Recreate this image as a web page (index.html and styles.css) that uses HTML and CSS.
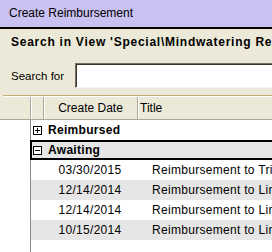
FILE: index.html
```html
<!DOCTYPE html>
<html>
<head>
<meta charset="utf-8">
<link rel="stylesheet" href="styles.css">
</head>
<body>
<div class="titlebar">Create Reimbursement</div>
<div class="panel">
  <div class="heading">Search in View 'Special\Mindwatering Reimbursements'</div>
  <div class="search">
    <span class="label">Search for</span>
    <div class="input"></div>
  </div>
  <div class="sep"></div>
</div>
<div class="view">
  <div class="hdr">
    <div class="hc hc0"></div>
    <div class="hc hc1"></div>
    <div class="hc hc2">Create Date</div>
    <div class="hc hc3">Title</div>
  </div>
  <div class="row">
    <div class="gut"></div>
    <div class="body cat">
      <svg class="twisty" width="9" height="9" viewBox="0 0 9 9"><rect x="0.5" y="0.5" width="8" height="8" fill="#fff" stroke="#000"/><path d="M2 4.5H7M4.5 2V7" stroke="#000"/></svg>
      <span>Reimbursed</span>
    </div>
  </div>
  <div class="row">
    <div class="gut"></div>
    <div class="body cat sel">
      <svg class="twisty" width="9" height="9" viewBox="0 0 9 9"><rect x="0.5" y="0.5" width="8" height="8" fill="#fff" stroke="#000"/><path d="M2 4.5H7" stroke="#000"/></svg>
      <span>Awaiting</span>
    </div>
  </div>
  <div class="row">
    <div class="gut"></div>
    <div class="body doc"><span class="c1"></span><span class="c2">03/30/2015</span><span class="c3">Reimbursement to Trina Smith</span></div>
  </div>
  <div class="row">
    <div class="gut"></div>
    <div class="body doc alt"><span class="c1"></span><span class="c2">12/14/2014</span><span class="c3">Reimbursement to Linda Brown</span></div>
  </div>
  <div class="row">
    <div class="gut"></div>
    <div class="body doc"><span class="c1"></span><span class="c2">12/14/2014</span><span class="c3">Reimbursement to Linda Brown</span></div>
  </div>
  <div class="row">
    <div class="gut"></div>
    <div class="body doc alt"><span class="c1"></span><span class="c2">10/15/2014</span><span class="c3">Reimbursement to Linda Brown</span></div>
  </div>
  <div class="row">
    <div class="gut"></div>
    <div class="body empty"></div>
  </div>
</div>
</body>
</html>
```

FILE: styles.css
```css
* { box-sizing: border-box; }
html, body { margin: 0; padding: 0; }
body {
  width: 272px;
  height: 252px;
  overflow: hidden;
  background: #fff;
  font-family: "Liberation Sans", Arial, sans-serif;
  font-size: 12px;
  color: #000;
}
.titlebar {
  height: 29px;
  background: #c9c1f1;
  border-bottom: 2px solid #000;
  padding-left: 9px;
  line-height: 27px;
  white-space: nowrap;
}
.panel {
  background: #ece9d8;
  padding-top: 5px;
}
.heading {
  font-weight: bold;
  font-size: 12px;
  letter-spacing: 0.75px;
  line-height: 16px;
  padding-left: 11px;
  white-space: nowrap;
  overflow: hidden;
}
.search {
  display: flex;
  align-items: center;
  margin-top: 13px;
  height: 25px;
}
.label {
  width: 75px;
  padding-left: 11px;
  font-size: 11.5px;
  white-space: nowrap;
}
.input {
  flex: 1;
  height: 25px;
  background: #fff;
  border-style: solid;
  border-width: 1px 0 1px 1px;
  border-color: #716f64 #fff #f4f3ee #716f64;
  box-shadow: inset 1px 1px 0 #3a3526;
}
.sep {
  margin: 7px 0 0 3px;
  height: 2px;
  border-top: 1px solid #c2ac7a;
  border-bottom: 1px solid #fff;
}
.hdr {
  display: flex;
  height: 23px;
  background: #ece9d8;
  border-bottom: 1px solid #aca899;
}
.hc {
  height: 22px;
  line-height: 22px;
  border-right: 1px solid #aca899;
  box-shadow: inset 1px 0 0 #fff;
  white-space: nowrap;
}
.hc0 { width: 31px; box-shadow: none; }
.hc1 { width: 13px; }
.hc2 { width: 94px; text-align: center; }
.hc3 { flex: 1; border-right: none; padding-left: 2px; }
.row {
  display: flex;
  height: 20px;
}
.gut {
  width: 30px;
  flex: none;
  background: #fff;
}
.body {
  flex: 1;
  display: flex;
  align-items: center;
  border-left: 1px solid #8a8a8a;
  white-space: nowrap;
  overflow: hidden;
}
.cat {
  font-weight: bold;
  font-size: 12px;
  letter-spacing: 0.3px;
}
.twisty {
  margin: 0 6px 0 2px;
  flex: none;
}
.sel {
  background: #e6e6e6;
  border-top: 2px solid #000;
  border-bottom: 2px solid #000;
  border-left: 2px solid #000;
}
.sel .twisty { margin-left: 1px; }
.doc .c1 { width: 12px; flex: none; }
.doc .c2 { width: 94px; flex: none; text-align: center; letter-spacing: 0.3px; }
.doc .c3 { padding-left: 15px; letter-spacing: 0.3px; }
.alt { background: #e6e6e6; }
.empty { height: 20px; }
```
